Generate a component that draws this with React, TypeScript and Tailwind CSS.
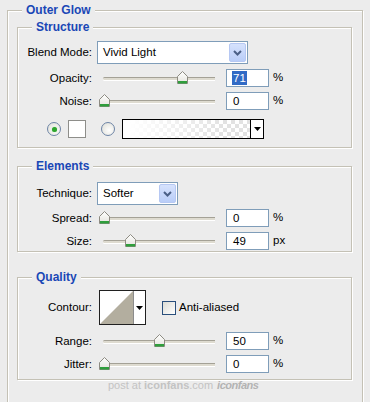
import React from "react";

const BG = "bg-[#ececec]";

function Legend({ children }: { children: React.ReactNode }) {
  return (
    <legend className="ml-[14px] px-[4px] h-[13px] leading-[13px] text-[12px] font-bold text-[#1a47b6] bg-[#ececec]">
      {children}
    </legend>
  );
}

function Label({ children }: { children: React.ReactNode }) {
  return <div className="w-[74px] shrink-0 text-right text-[11.5px] leading-[13px] text-black">{children}</div>;
}

function Chevron() {
  return (
    <svg width="9" height="6" viewBox="0 0 9 6">
      <path d="M1 1 L4.5 4.5 L8 1" fill="none" stroke="#4a5f86" strokeWidth="2" />
    </svg>
  );
}

function Select({ value, width }: { value: string; width: string }) {
  return (
    <div className={`ml-[5px] ${width} h-[23px] border border-[#7f9db9] bg-white flex items-center`}>
      <span className="pl-[5px] flex-1 text-[11.5px] leading-[13px] text-black">{value}</span>
      <div className="mr-[1px] w-[17px] h-[19px] rounded-[2px] border border-[#b6c8f3] bg-[linear-gradient(#d6e2fd,#b9cdf8)] flex items-center justify-center">
        <Chevron />
      </div>
    </div>
  );
}

function Thumb() {
  return (
    <svg width="11" height="13" viewBox="0 0 11 13">
      <defs>
        <linearGradient id="thumbg" x1="0" y1="0" x2="0" y2="1">
          <stop offset="0" stopColor="#ffffff" />
          <stop offset="1" stopColor="#e4e3dc" />
        </linearGradient>
      </defs>
      <path d="M0.5 5.5 L5.5 0.5 L10.5 5.5 L10.5 12.5 L0.5 12.5 Z" fill="url(#thumbg)" stroke="#8d8b82" />
      <rect x="1" y="10" width="9" height="2.5" fill="#2f9e3c" />
    </svg>
  );
}

function Slider({ left }: { left: string }) {
  return (
    <div className="ml-[5px] relative w-[122px] h-[18px] flex items-center">
      <div className="ml-[6px] w-[112px] h-[3px] rounded-l-full bg-[#dedbd0] border-t border-[#a4a196] shadow-[0_1px_0_#ffffff]" />
      <div className={`absolute top-[2px] ${left} leading-[0]`}>
        <Thumb />
      </div>
    </div>
  );
}

function NumInput({ value, selected }: { value: string; selected?: boolean }) {
  return (
    <div className="ml-[7px] w-[43px] h-[18px] border border-[#7f9db9] bg-white flex items-center pl-[5px]">
      {selected ? (
        <span className="bg-[#316ac5] text-white text-[11.5px] leading-[14px] px-[1px]">{value}</span>
      ) : (
        <span className="text-black text-[11.5px] leading-[14px] px-[1px]">{value}</span>
      )}
    </div>
  );
}

function SliderRow({
  label,
  left,
  value,
  unit,
  mt,
  selected,
}: {
  label: string;
  left: string;
  value: string;
  unit: string;
  mt: string;
  selected?: boolean;
}) {
  return (
    <div className={`flex items-center ${mt} h-[18px]`}>
      <Label>{label}</Label>
      <Slider left={left} />
      <NumInput value={value} selected={selected} />
      <span className="ml-[4px] text-[11.5px] leading-[13px] text-black -mt-[2px]">{unit}</span>
    </div>
  );
}

function Radio({ checked }: { checked?: boolean }) {
  return (
    <div className="w-[14px] h-[14px] rounded-full border border-[#6d84a6] bg-[radial-gradient(circle_at_60%_60%,#ffffff,#dcdcd4)] flex items-center justify-center">
      {checked && <div className="w-[5px] h-[5px] rounded-full bg-[#2ea52e] shadow-[0_0_1px_#7fd17f]" />}
    </div>
  );
}

function DownTri() {
  return (
    <svg width="7" height="4" viewBox="0 0 7 4">
      <path d="M0 0 L7 0 L3.5 4 Z" fill="#000" />
    </svg>
  );
}

const fieldsetCls =
  "border border-[#c4c1b5] shadow-[1px_1px_0_#ffffff,inset_1px_1px_0_#ffffff] p-0 m-0 min-w-0";

export default function App() {
  return (
    <div className={`w-[370px] h-[402px] overflow-hidden ${BG} font-['Liberation_Sans',Arial,sans-serif] text-black`}>
      <fieldset className={`${fieldsetCls} ml-[7px] mt-[4px] w-[356px] h-[420px]`}>
        <Legend>Outer Glow</Legend>

        {/* Structure */}
        <fieldset className={`${fieldsetCls} ml-[9px] mt-[4px] w-[335px] pb-[8px]`}>
          <Legend>Structure</Legend>
          <div className="flex items-center mt-[7px] h-[23px]">
            <Label>Blend Mode:</Label>
            <Select value="Vivid Light" width="w-[151px]" />
          </div>
          <SliderRow label="Opacity:" left="left-[80px]" value="71" unit="%" mt="mt-[5px]" selected />
          <SliderRow label="Noise:" left="left-[2px]" value="0" unit="%" mt="mt-[5px]" />
          <div className="flex items-center mt-[9px] h-[20px] pl-[29px]">
            <Radio checked />
            <div className="ml-[7px] w-[18px] h-[18px] border border-[#8e8e8a] bg-white" />
            <div className="ml-[15px]">
              <Radio />
            </div>
            <div className="ml-[7px] w-[142px] h-[20px] border border-black flex">
              <div className="flex-1 bg-[image:linear-gradient(to_right,#ffffff_5%,rgba(255,255,255,0)_80%),repeating-conic-gradient(#e2e2e2_0_25%,#ffffff_0_50%)] bg-[length:100%_100%,8px_8px]" />
              <div className="w-[13px] border-l border-black bg-white flex items-center justify-center">
                <DownTri />
              </div>
            </div>
          </div>
        </fieldset>

        {/* Elements */}
        <fieldset className={`${fieldsetCls} ml-[9px] mt-[12px] w-[335px] pb-[1px]`}>
          <Legend>Elements</Legend>
          <div className="flex items-center mt-[9px] h-[23px]">
            <Label>Technique:</Label>
            <Select value="Softer" width="w-[81px]" />
          </div>
          <SliderRow label="Spread:" left="left-[2px]" value="0" unit="%" mt="mt-[4px]" />
          <SliderRow label="Size:" left="left-[28px]" value="49" unit="px" mt="mt-[5px]" />
        </fieldset>

        {/* Quality */}
        <fieldset className={`${fieldsetCls} ml-[9px] mt-[19px] w-[335px] pb-[6px]`}>
          <Legend>Quality</Legend>
          <div className="flex items-center mt-[6px] h-[35px]">
            <Label>Contour:</Label>
            <div className="ml-[7px] w-[47px] h-[35px] border border-[#202020] bg-white flex">
              <svg width="33" height="33" viewBox="0 0 33 33" className="shrink-0">
                <path d="M0 33 L33 0 L33 33 Z" fill="#b3ae9f" />
              </svg>
              <div className="flex-1 border-l border-[#8c8c8c] flex items-center justify-center">
                <DownTri />
              </div>
            </div>
            <div className="ml-[16px] w-[14px] h-[14px] border border-[#2a4f7c] bg-[linear-gradient(135deg,#dcdcd5,#ffffff)]" />
            <span className="ml-[3px] text-[11.5px] leading-[13px]">Anti-aliased</span>
          </div>
          <SliderRow label="Range:" left="left-[57px]" value="50" unit="%" mt="mt-[7px]" />
          <SliderRow label="Jitter:" left="left-[2px]" value="0" unit="%" mt="mt-[5px]" />
        </fieldset>

        <div className="pl-[100px] h-[11px] flex items-center text-[11px] leading-[11px] text-[#c3c3c3]">
          <span>post at </span>
          <span className="font-bold ml-[3px]">iconfans</span>
          <span>.com</span>
          <span className="ml-[4px] italic font-bold text-[#b3b3b3] tracking-[-0.5px]">iconfans</span>
        </div>
      </fieldset>
    </div>
  );
}
